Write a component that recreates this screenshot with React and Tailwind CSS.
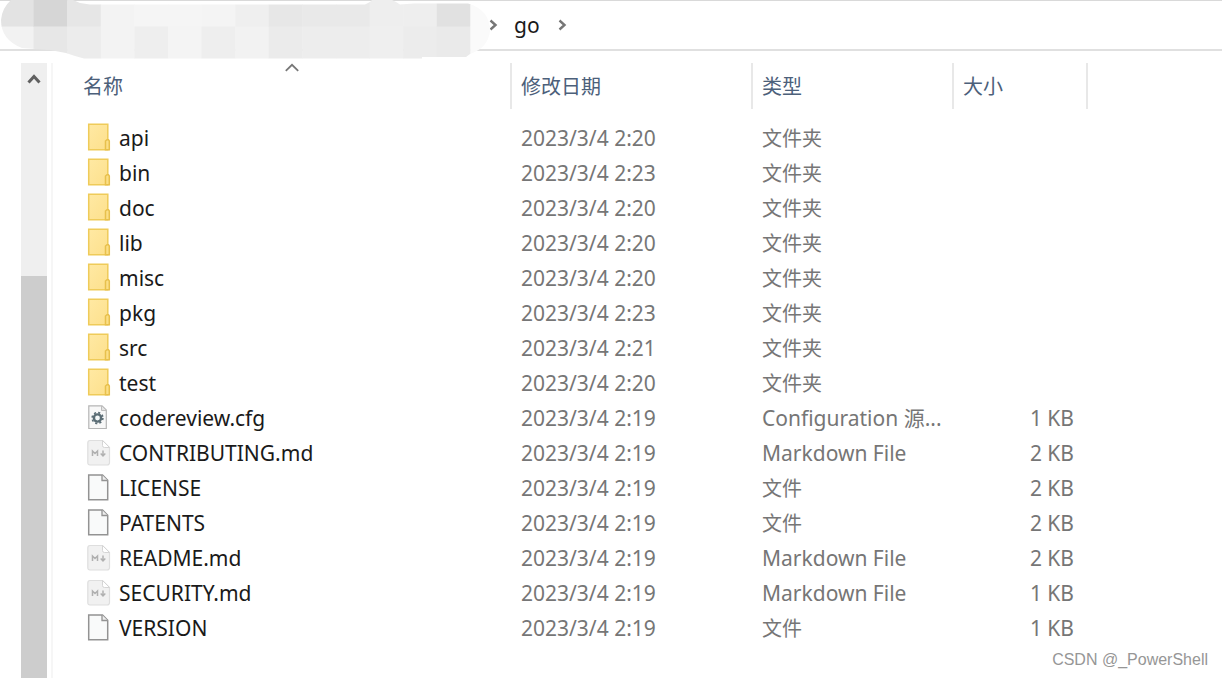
import React from 'react';

const files = [
  { name: 'api', date: '2023/3/4 2:20', kind: 'folder', type: '文件夹' },
  { name: 'bin', date: '2023/3/4 2:23', kind: 'folder', type: '文件夹' },
  { name: 'doc', date: '2023/3/4 2:20', kind: 'folder', type: '文件夹' },
  { name: 'lib', date: '2023/3/4 2:20', kind: 'folder', type: '文件夹' },
  { name: 'misc', date: '2023/3/4 2:20', kind: 'folder', type: '文件夹' },
  { name: 'pkg', date: '2023/3/4 2:23', kind: 'folder', type: '文件夹' },
  { name: 'src', date: '2023/3/4 2:21', kind: 'folder', type: '文件夹' },
  { name: 'test', date: '2023/3/4 2:20', kind: 'folder', type: '文件夹' },
  { name: 'codereview.cfg', date: '2023/3/4 2:19', kind: 'config', type: 'Configuration 源...', size: '1 KB' },
  { name: 'CONTRIBUTING.md', date: '2023/3/4 2:19', kind: 'markdown', type: 'Markdown File', size: '2 KB' },
  { name: 'LICENSE', date: '2023/3/4 2:19', kind: 'file', type: '文件', size: '2 KB' },
  { name: 'PATENTS', date: '2023/3/4 2:19', kind: 'file', type: '文件', size: '2 KB' },
  { name: 'README.md', date: '2023/3/4 2:19', kind: 'markdown', type: 'Markdown File', size: '2 KB' },
  { name: 'SECURITY.md', date: '2023/3/4 2:19', kind: 'markdown', type: 'Markdown File', size: '1 KB' },
  { name: 'VERSION', date: '2023/3/4 2:19', kind: 'file', type: '文件', size: '1 KB' },
];

// Chinese labels are set a touch smaller than the Latin ones
const typeSize = {
  folder: 'text-xl',
  file: 'text-xl',
  config: 'text-[21px]',
  markdown: 'text-[21px]',
};

// Greys of the pixelated part of the path, one pair per tile column
const tiles = [
  ['#e3e3e3', '#f2f2f2'],
  ['#d6d6d6', '#e7e7e7'],
  ['#e6e6e6', '#ececec'],
  ['#f3f3f3', '#f3f3f3'],
  ['#f5f5f5', '#eeeeee'],
  ['#f5f5f5', '#f4f4f4'],
  ['#f4f4f4', '#eeeeee'],
  ['#efefef', '#f2f2f2'],
  ['#e7e7e7', '#ebebeb'],
  ['#e9e9e9', '#ededed'],
  ['#e9e9e9', '#ededed'],
  ['#eeeeee', '#efefef'],
  ['#eeeeee', '#ececec'],
  ['#e1e1e1', '#eaeaea'],
  ['#fafafa', '#fafafa'],
];

function HiddenPath() {
  return (
    <svg className="absolute -top-px left-0" width="490" height="59" viewBox="0 0 490 59" aria-hidden="true">
      <clipPath id="smudge">
        <path d="M11 0H73L80 3L90 4.500H365L370 2L372 0H392L396 2L400 4.500L414 3.500H468Q490 10 490 31Q488 48 470 54L466 57H422V58.500H84L75 56L66 53L50 50L22 48Q1 40 1 20Q2 8 11 0Z" />
      </clipPath>
      <g clipPath="url(#smudge)">
        {tiles.map(([top, bottom], i) => (
          <g key={i}>
            <rect x={i * 33.6} y="0" width="34" height="27" fill={top} />
            <rect x={i * 33.6} y="26.500" width="34" height="33" fill={bottom} />
          </g>
        ))}
      </g>
    </svg>
  );
}

function Crumb() {
  return (
    <svg className="shrink-0" width="9" height="12" viewBox="0 0 9 12" fill="none" stroke="#767676" strokeWidth="2.400" aria-hidden="true">
      <path d="M1.500 1.500L6.500 6L1.500 10.500" />
    </svg>
  );
}

function FileIcon({ kind }) {
  if (kind === 'folder') {
    return (
      <svg className="mb-1" width="24" height="28" viewBox="0 0 24 28" aria-hidden="true">
        <defs>
          <linearGradient id="folder" x1="0" y1="0" x2="1" y2="1">
            <stop offset="0" stopColor="#ffe9a3" />
            <stop offset="1" stopColor="#fde08c" />
          </linearGradient>
        </defs>
        <path d="M1.700 1.200H20.800V26.800H1.700Z" fill="url(#folder)" stroke="#efcb59" strokeWidth="1.500" />
        <path d="M18.500 26.800V18L20 16.700H21.500L22.300 18V26.800Z" fill="#fbdf87" stroke="#e8c04c" strokeWidth="1.500" />
      </svg>
    );
  }
  if (kind === 'config') {
    return (
      <svg className="mb-1" width="24" height="28" viewBox="0 0 24 28" aria-hidden="true">
        <path d="M1.800 2.800H15L19.300 7.100V25.500H1.800Z" fill="#f8f8f8" stroke="#b5b5b5" strokeWidth="1.200" />
        <path d="M14.500 3V7.500H19" fill="#e4e4e4" stroke="#bdbdbd" />
        <circle cx="10.500" cy="15" r="3.600" fill="#f4f8f9" stroke="#5b6d75" strokeWidth="2.400" />
        <circle cx="10.500" cy="15" r="5.400" fill="none" stroke="#5b6d75" strokeWidth="1.600" strokeDasharray="2.120 2.120" />
      </svg>
    );
  }
  if (kind === 'markdown') {
    return (
      <svg className="mb-1" width="24" height="28" viewBox="0 0 24 28" fill="none" aria-hidden="true">
        <path d="M3 2.500H15.500L22.500 9.500V24.500Q22.500 27 20 27H3Q.8 27 .8 24.500V5Q.8 2.500 3 2.500Z" fill="#f1f1f1" stroke="#dedede" strokeWidth="1.200" />
        <path d="M15.500 2.500V7.500Q15.500 9.500 17.500 9.500H22.500Z" fill="#fff" stroke="#d5d5d5" />
        <path d="M5.500 18V13L8 15.500L10.500 13V18" stroke="#b0b0b0" strokeWidth="1.500" />
        <path d="M16 12.500V17.500M13.700 15.500L16 18L18.300 15.500" stroke="#b0b0b0" strokeWidth="1.500" />
      </svg>
    );
  }
  return (
    <svg className="mb-1" width="24" height="28" viewBox="0 0 24 28" aria-hidden="true">
      <path d="M1.700 2H15.500L20.700 7.200V26.700H1.700Z" fill="#f9fafa" stroke="#939393" strokeWidth="1.500" />
      <path d="M15 2V7.500H20.700" fill="#eee" stroke="#939393" strokeWidth="1.300" />
    </svg>
  );
}

function HeaderCell({ children, sorted }) {
  return (
    <th scope="col" aria-sort={sorted ? 'ascending' : undefined} className="p-0 pb-3 font-normal">
      <button
        type="button"
        className={`relative flex h-[46px] w-full items-center text-left text-[#4c607a] ${sorted ? 'pl-[10px]' : 'border-l-2 border-[#e8e8e8] pl-[9px]'}`}
      >
        {sorted && (
          <svg className="absolute top-0 left-1/2 -translate-x-1/2" width="16" height="9" viewBox="0 0 16 9" fill="none" stroke="#777" strokeWidth="1.800" aria-hidden="true">
            <path d="M1.800 7.800L8 1.800L14.200 7.800" />
          </svg>
        )}
        {children}
      </button>
    </th>
  );
}

export default function App() {
  return (
    <div className="relative flex min-h-screen flex-col bg-white font-['Noto_Sans','Noto_Sans_CJK_SC',sans-serif] text-xl leading-[35px]">
      <nav className="relative flex h-[51px] items-center border-t border-b-2 border-t-[#d9d9d9] border-b-[#e0e0e0] pl-[489px]">
        <HiddenPath />
        <Crumb />
        <a href="#go" className="mx-4 pr-0.5 text-[21px] text-[#1a1a1a]">go</a>
        <Crumb />
      </nav>

      <div className="flex flex-1 pt-3 pl-[21px]">
        <div className="flex w-[26px] shrink-0 flex-col bg-[#efefef]">
          <div className="grow-[213] basis-0">
            <button type="button" aria-label="向上滚动" className="flex h-8 w-full items-center justify-center">
              <svg width="14" height="12" viewBox="0 0 14 12" fill="none" stroke="#606060" strokeWidth="3" aria-hidden="true">
                <path d="M1.500 9.500L7 3.500L12.500 9.500" />
              </svg>
            </button>
          </div>
          <div className="grow-[402] basis-0 bg-[#cdcdcd]" />
        </div>

        <main className="ml-1 flex-1 border-l-2 border-[#f6f6f6] pl-5">
          <table className="w-full table-fixed border-collapse text-left">
            <colgroup>
              <col className="w-[437px]" />
              <col className="w-[241px]" />
              <col className="w-[201px]" />
              <col className="w-[134px]" />
              <col />
            </colgroup>
            <thead>
              <tr>
                <HeaderCell sorted>名称</HeaderCell>
                <HeaderCell>修改日期</HeaderCell>
                <HeaderCell>类型</HeaderCell>
                <HeaderCell>大小</HeaderCell>
                <td className="p-0 pb-3">
                  <div className="h-[46px] border-l-2 border-[#e8e8e8]" />
                </td>
              </tr>
            </thead>
            <tbody className="text-[21px] text-[#767676]">
              {files.map((file) => (
                <tr key={file.name} className="h-[35px] whitespace-nowrap">
                  <td className="p-0 text-[#1a1a1a]">
                    <div className="flex h-[35px] items-center gap-2 pl-[14px]">
                      <FileIcon kind={file.kind} />
                      {file.name}
                    </div>
                  </td>
                  <td className="p-0 pl-[11px]">{file.date}</td>
                  <td className={`p-0 pl-[11px] ${typeSize[file.kind]}`}>{file.type}</td>
                  <td className="p-0 pr-3 text-right">{file.size}</td>
                </tr>
              ))}
            </tbody>
          </table>
        </main>
      </div>

      <span className="absolute right-[14px] bottom-2 font-['Liberation_Sans',sans-serif] text-base leading-5 text-[#969696]">
        CSDN @_PowerShell
      </span>
    </div>
  );
}
